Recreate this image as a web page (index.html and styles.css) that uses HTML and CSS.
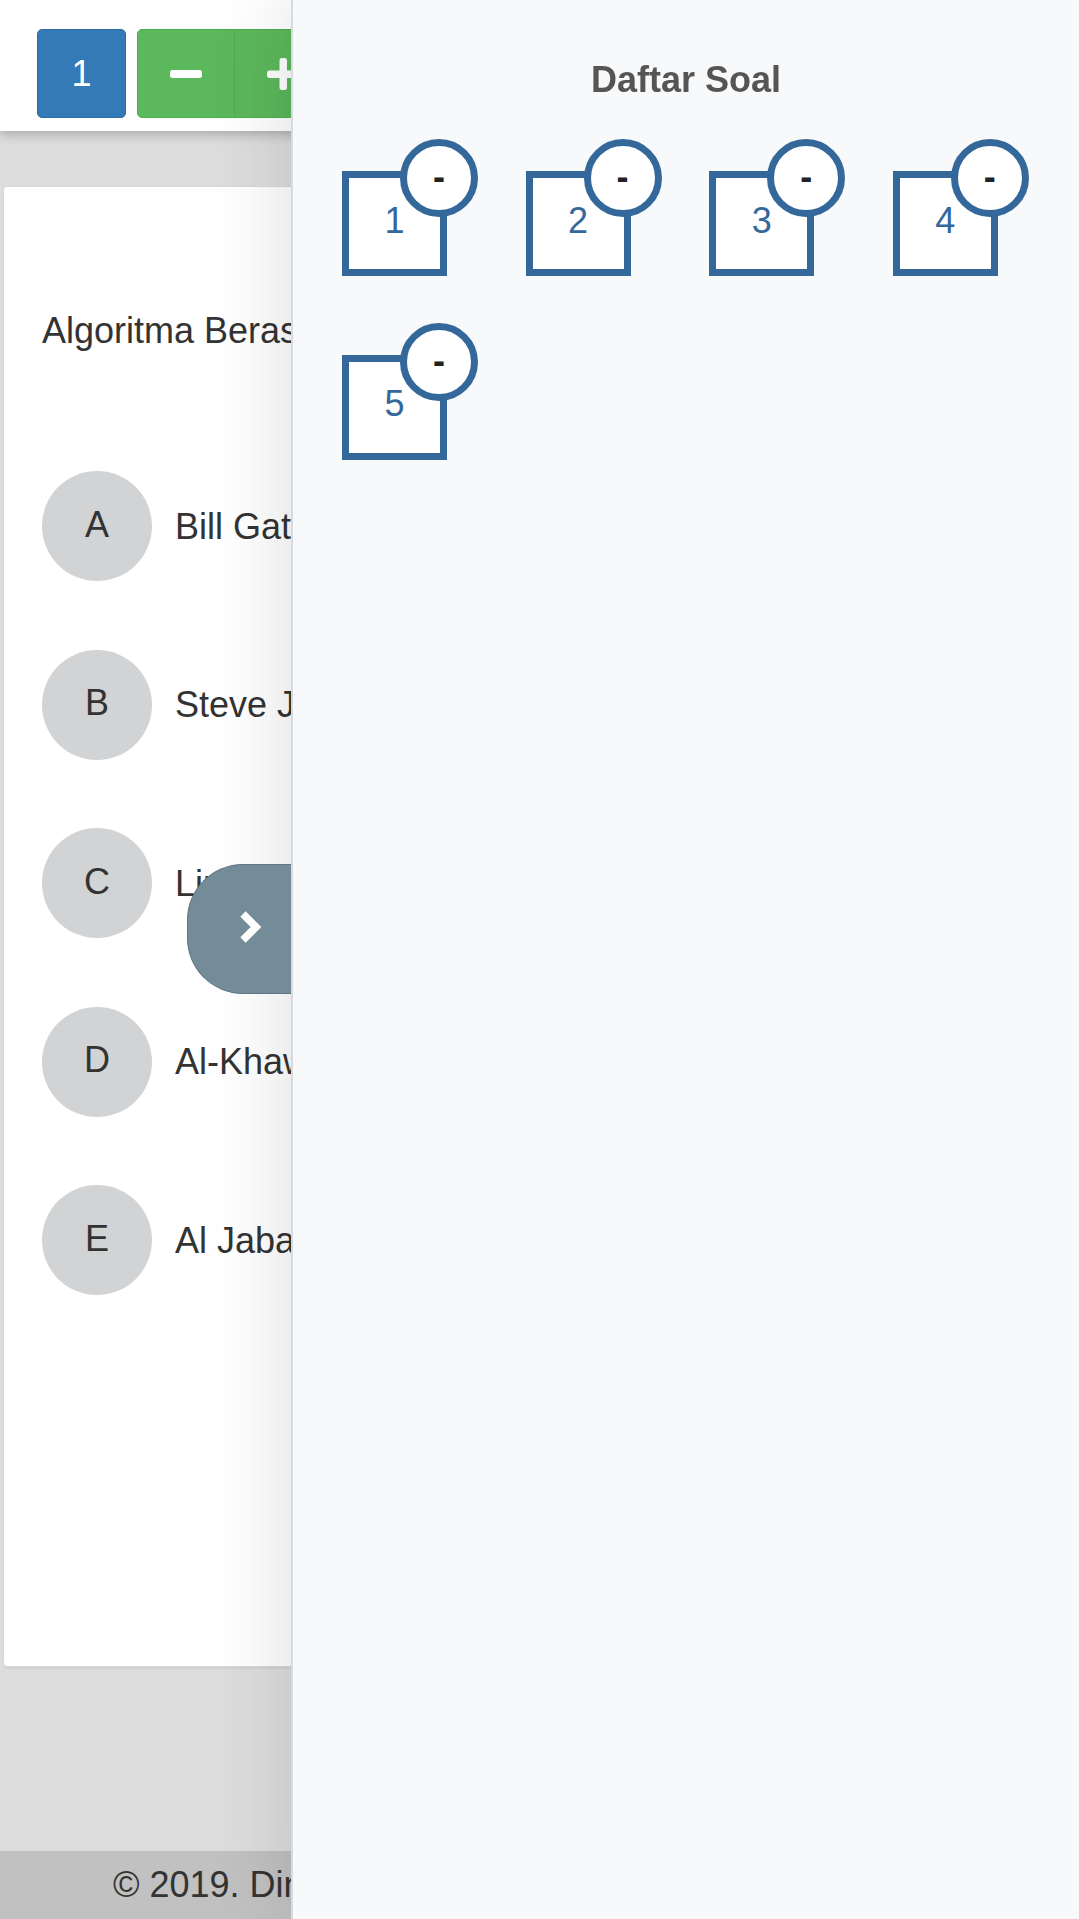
FILE: index.html
```html
<!DOCTYPE html>
<html lang="id">
<head>
<meta charset="utf-8">
<title>Ujian - Daftar Soal</title>
<link rel="stylesheet" href="styles.css">
</head>
<body>
<header class="topbar">
  <div class="num-btn">1</div>
  <div class="btn-group">
    <button class="btn-green first" type="button" aria-label="Perkecil">
      <svg width="32" height="8" viewBox="0 0 32 8"><rect x="0" y="0" width="32" height="8" rx="2.5" fill="#fff"/></svg>
    </button>
    <button class="btn-green" type="button" aria-label="Perbesar">
      <svg width="32" height="32" viewBox="0 0 32 32"><rect x="0" y="12.5" width="32" height="7.5" rx="2.5" fill="#fff"/><rect x="12.5" y="0" width="7.5" height="32" rx="2.5" fill="#fff"/></svg>
    </button>
    <button class="btn-green" type="button" aria-label="Reset">A</button>
  </div>
</header>

<main class="content">
  <section class="card">
    <p class="question">Algoritma Berasal dari nama ilmuwan?</p>
    <ul class="options">
      <li class="option"><span class="opt-letter">A</span><span class="opt-text">Bill Gates</span></li>
      <li class="option"><span class="opt-letter">B</span><span class="opt-text">Steve Jobs</span></li>
      <li class="option"><span class="opt-letter">C</span><span class="opt-text">Linus Torvalds</span></li>
      <li class="option"><span class="opt-letter">D</span><span class="opt-text">Al-Khawarizmi</span></li>
      <li class="option"><span class="opt-letter">E</span><span class="opt-text">Al Jabar</span></li>
    </ul>
  </section>
</main>

<footer class="footer">© 2019. Dinas Pendidikan Kota</footer>

<aside class="panel">
  <button class="panel-toggle" type="button" aria-label="Tutup daftar soal">
    <svg width="26" height="34" viewBox="0 0 26 34"><polyline points="4,4 17,17 4,30" fill="none" stroke="#fff" stroke-width="7.5" stroke-linejoin="miter"/></svg>
  </button>
  <h2 class="panel-title">Daftar Soal</h2>
  <div class="soal-grid">
    <div class="soal-box">1<span class="soal-badge">-</span></div>
    <div class="soal-box">2<span class="soal-badge">-</span></div>
    <div class="soal-box">3<span class="soal-badge">-</span></div>
    <div class="soal-box">4<span class="soal-badge">-</span></div>
    <div class="soal-box">5<span class="soal-badge">-</span></div>
  </div>
</aside>
</body>
</html>
```

FILE: styles.css
```css
* {
  box-sizing: border-box;
}

html, body {
  margin: 0;
  padding: 0;
}

body {
  background: #dddddd;
  font-family: "Liberation Sans", Arial, sans-serif;
  color: #333333;
  min-height: 1919px;
  overflow: hidden;
}

/* Top bar */
.topbar {
  position: relative;
  z-index: 1;
  height: 131px;
  background: #ffffff;
  padding: 29px 0 0 37px;
  display: flex;
  align-items: flex-start;
  gap: 11px;
  box-shadow: 0 4px 10px rgba(0, 0, 0, 0.22);
}

.num-btn {
  width: 89px;
  height: 89px;
  background: #337ab7;
  border: 1px solid #2e6da4;
  border-radius: 5px;
  color: #ffffff;
  font-size: 36px;
  display: flex;
  align-items: center;
  justify-content: center;
}

.btn-group {
  display: flex;
}

.btn-green {
  width: 98px;
  height: 89px;
  margin: 0;
  padding: 0;
  background: #5cb85c;
  border: 1px solid #4cae4c;
  color: #ffffff;
  font-family: "Liberation Sans", Arial, sans-serif;
  font-size: 32px;
  display: flex;
  align-items: center;
  justify-content: center;
}

.btn-green + .btn-green {
  margin-left: -1px;
}

.btn-green.first {
  border-radius: 5px 0 0 5px;
}

/* Main card */
.content {
  padding: 55px 3px 0 3px;
}

.card {
  height: 1481px;
  background: #ffffff;
  border: 1px solid #d9d9d9;
  border-radius: 4px;
  box-shadow: 0 2px 2px rgba(0, 0, 0, 0.06);
  padding: 123px 38px 0 38px;
}

.question {
  margin: 0;
  font-size: 36px;
  line-height: 41px;
  color: #333333;
  white-space: nowrap;
}

.options {
  list-style: none;
  margin: 120px 0 0 0;
  padding: 0;
  display: flex;
  flex-direction: column;
  gap: 68.5px;
}

.option {
  display: flex;
  align-items: center;
  gap: 23px;
}

.opt-letter {
  flex: none;
  width: 110px;
  height: 110px;
  border-radius: 50%;
  background: #d2d3d5;
  color: #333333;
  font-size: 36px;
  display: flex;
  align-items: center;
  justify-content: center;
  padding-bottom: 3px;
}

.opt-text {
  font-size: 36px;
  line-height: 41px;
  color: #333333;
  white-space: nowrap;
}

/* Footer */
.footer {
  margin-top: 184px;
  height: 68px;
  background: #c1c1c1;
  font-size: 36px;
  line-height: 41px;
  padding: 13px 0 0 113px;
  color: #333333;
  white-space: nowrap;
}

/* Side panel */
.panel {
  position: fixed;
  top: 0;
  right: 0;
  z-index: 5;
  width: 788px;
  height: 1919px;
  background: #f8f9fb;
  border-left: 2px solid #d6dae1;
  box-shadow: 0 0 80px rgba(0, 0, 0, 0.14);
  padding-top: 59px;
}

.panel-toggle {
  position: absolute;
  top: 864px;
  right: calc(100% + 2px);
  width: 104px;
  height: 130px;
  margin: 0;
  padding: 0 0 4px 24px;
  background: #748b98;
  border: 1px solid #5f7583;
  border-right: none;
  border-radius: 56px 0 0 56px;
  display: flex;
  align-items: center;
  justify-content: center;
}

.panel-title {
  margin: 0;
  text-align: center;
  font-size: 36px;
  line-height: 41px;
  font-weight: bold;
  color: #555555;
}

.soal-grid {
  margin-top: 71px;
  padding-left: 49px;
  display: grid;
  grid-template-columns: repeat(4, 105px);
  column-gap: 78.6px;
  row-gap: 78.6px;
}

.soal-box {
  position: relative;
  width: 105px;
  height: 105px;
  background: #ffffff;
  border: 7px solid #35689a;
  color: #35689a;
  font-size: 36px;
  display: flex;
  align-items: center;
  justify-content: center;
  padding-bottom: 6px;
}

.soal-badge {
  position: absolute;
  top: -39px;
  right: -38px;
  width: 78px;
  height: 78px;
  border-radius: 50%;
  background: #ffffff;
  border: 7.5px solid #35689a;
  color: #222222;
  font-size: 36px;
  font-weight: bold;
  display: flex;
  align-items: center;
  justify-content: center;
  padding-bottom: 2px;
}
```
